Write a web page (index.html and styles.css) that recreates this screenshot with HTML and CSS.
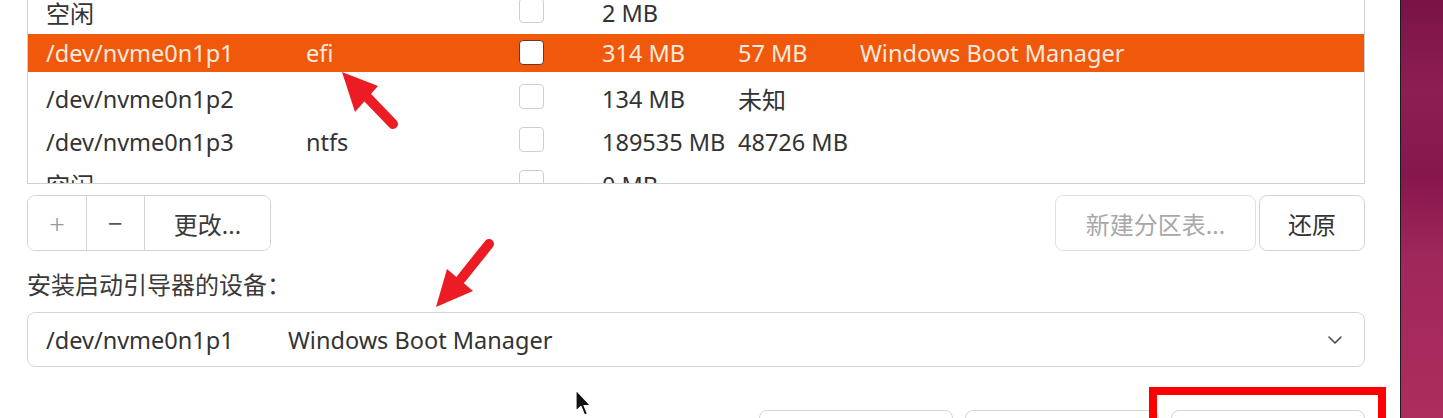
FILE: index.html
```html
<!DOCTYPE html>
<html lang="zh">
<head>
<meta charset="utf-8">
<title>安装类型</title>
<link rel="stylesheet" href="styles.css">
</head>
<body>
<div class="screen">
  <div class="dialog">
    <div class="table-view">
      <div class="rows">
        <div class="row">
          <div class="zh">空闲</div><div></div><div><span class="check"></span></div><div>2 MB</div><div></div><div></div>
        </div>
        <div class="row selected">
          <div>/dev/nvme0n1p1</div><div>efi</div><div><span class="check"></span></div><div>314 MB</div><div>57 MB</div><div>Windows Boot Manager</div>
        </div>
        <div class="row">
          <div>/dev/nvme0n1p2</div><div></div><div><span class="check"></span></div><div>134 MB</div><div class="zh">未知</div><div></div>
        </div>
        <div class="row">
          <div>/dev/nvme0n1p3</div><div>ntfs</div><div><span class="check"></span></div><div>189535 MB</div><div>48726 MB</div><div></div>
        </div>
        <div class="row">
          <div class="zh">空闲</div><div></div><div><span class="check"></span></div><div>0 MB</div><div></div><div></div>
        </div>
      </div>
    </div>

    <div class="toolbar">
      <div class="linked">
        <button class="seg seg-plus">+</button>
        <button class="seg seg-minus">−</button>
        <button class="seg seg-change zh">更改...</button>
      </div>
      <div class="right-group">
        <button class="btn btn-new zh">新建分区表...</button>
        <button class="btn btn-revert zh">还原</button>
      </div>
    </div>

    <div class="label zh">安装启动引导器的设备：</div>

    <div class="combo">
      <span class="combo-dev">/dev/nvme0n1p1</span>
      <span class="combo-name">Windows Boot Manager</span>
      <svg class="chevron" width="14" height="8" viewBox="0 0 14 8"><path d="M1 1 L7 7 L13 1" fill="none" stroke="#4a4a4a" stroke-width="1.6" stroke-linecap="round" stroke-linejoin="round"/></svg>
    </div>

    <div class="actions">
      <button class="btn action zh">退出</button>
      <button class="btn action zh">后退</button>
      <button class="btn action zh">现在安装</button>
    </div>
  </div>
  <div class="edge"></div>
  <div class="desktop"></div>

  <div class="highlight-box"></div>

  <svg class="annot" width="1443" height="418" viewBox="0 0 1443 418">
    <line x1="393" y1="124" x2="368" y2="98" stroke="#ec1c24" stroke-width="10" stroke-linecap="round"/>
    <polygon points="342,72 378,86 355,112" fill="#ec1c24"/>
    <line x1="489" y1="244" x2="461" y2="279" stroke="#ec1c24" stroke-width="10" stroke-linecap="round"/>
    <polygon points="436,307 447,269 473,291" fill="#ec1c24"/>
  </svg>

  <svg class="cursor" width="18" height="28" viewBox="0 0 18 28">
    <path d="M1 1 L1 22 L6 17.5 L9.5 26 L12.5 24.8 L9 16.5 L15.5 16.5 Z" fill="#111" stroke="#fff" stroke-width="1.2" stroke-linejoin="round"/>
  </svg>
</div>
</body>
</html>
```

FILE: styles.css
```css
html, body {
  margin: 0;
  padding: 0;
  background: #ffffff;
  overflow: hidden;
}

body {
  font-family: "Noto Sans", "Noto Sans CJK SC", sans-serif;
  font-size: 23.5px;
  color: #333333;
}

.screen {
  position: relative;
  display: flex;
  width: 1443px;
  height: 418px;
  overflow: hidden;
}

.dialog {
  width: 1400px;
  flex: none;
  box-sizing: border-box;
  padding: 0 35px 0 27px;
  background: #ffffff;
}

.edge {
  width: 1px;
  flex: none;
  background: #1c1c1c;
}

.desktop {
  flex: 1;
  background: linear-gradient(180deg, #7a1245 0%, #8d1e52 22%, #86174c 42%, #a0275a 62%, #ac2d5e 100%);
}

.zh {
  font-size: 24px;
}

/* partition table */
.table-view {
  height: 184px;
  box-sizing: border-box;
  border: 1px solid #cfcfcf;
  border-top: none;
  overflow: hidden;
}

.rows {
  margin-top: -9px;
}

.row {
  display: grid;
  grid-template-columns: 260px 213px 83px 136px 122px 1fr;
  align-items: center;
  height: 43px;
  padding-left: 18px;
  box-sizing: border-box;
  white-space: nowrap;
  color: #333333;
}

.row.selected {
  padding-bottom: 5px;
  background: linear-gradient(180deg, #f0580c 0, #f0580c 38px, transparent 38px);
  color: #fdeadc;
}

.check {
  display: block;
  width: 25px;
  height: 25px;
  box-sizing: border-box;
  border: 1px solid #cfcfcf;
  border-radius: 4px;
  background: #ffffff;
  margin-top: -4px;
}

.row.selected .check {
  border-color: #6e3424;
  margin-top: -1px;
}

/* toolbar */
.toolbar {
  display: flex;
  justify-content: space-between;
  margin-top: 11px;
  height: 56px;
}

.linked {
  display: flex;
  border: 1px solid #d4d4d4;
  border-radius: 8px;
  overflow: hidden;
}

.seg {
  border: none;
  background: #ffffff;
  font-family: inherit;
  font-size: 22px;
  color: #444444;
  padding: 0;
  margin: 0;
}

.seg + .seg {
  border-left: 1px solid #d4d4d4;
}

.seg-plus {
  width: 58px;
  color: #9a9a9a;
  font-size: 28px;
  font-weight: 300;
}

.seg-minus {
  width: 58px;
  color: #555555;
  font-size: 26px;
}

.seg-change {
  width: 126px;
  font-size: 24px;
  color: #3a3a3a;
}

.right-group {
  display: flex;
  gap: 3px;
}

.btn {
  box-sizing: border-box;
  border: 1px solid #d4d4d4;
  border-radius: 8px;
  background: #ffffff;
  font-family: inherit;
  color: #333333;
  padding: 0;
  margin: 0;
}

.btn-new {
  width: 201px;
  color: #a8a8a8;
  border-color: #e0e0e0;
  font-size: 24px;
}

.btn-revert {
  width: 106px;
  font-size: 24px;
}

/* boot loader device */
.label {
  margin-top: 19px;
  line-height: 30px;
  color: #3a3a3a;
}

.combo {
  display: flex;
  align-items: center;
  margin-top: 12px;
  height: 55px;
  box-sizing: border-box;
  border: 1px solid #d6d6d6;
  border-radius: 8px;
  padding: 0 22px 0 18px;
  color: #333333;
}

.combo-dev {
  width: 242px;
  flex: none;
}

.combo-name {
  flex: 1;
}

.chevron {
  flex: none;
}

/* bottom actions */
.actions {
  display: flex;
  justify-content: flex-end;
  gap: 12px;
  margin-top: 43px;
}

.action {
  width: 194px;
  height: 56px;
  font-size: 24px;
}

/* annotations / overlays */
.highlight-box {
  position: absolute;
  left: 1149px;
  top: 387px;
  width: 237px;
  height: 60px;
  box-sizing: border-box;
  border: 8px solid #ff0000;
}

.annot {
  position: absolute;
  left: 0;
  top: 0;
  pointer-events: none;
}

.cursor {
  position: absolute;
  left: 575px;
  top: 389px;
}
```
